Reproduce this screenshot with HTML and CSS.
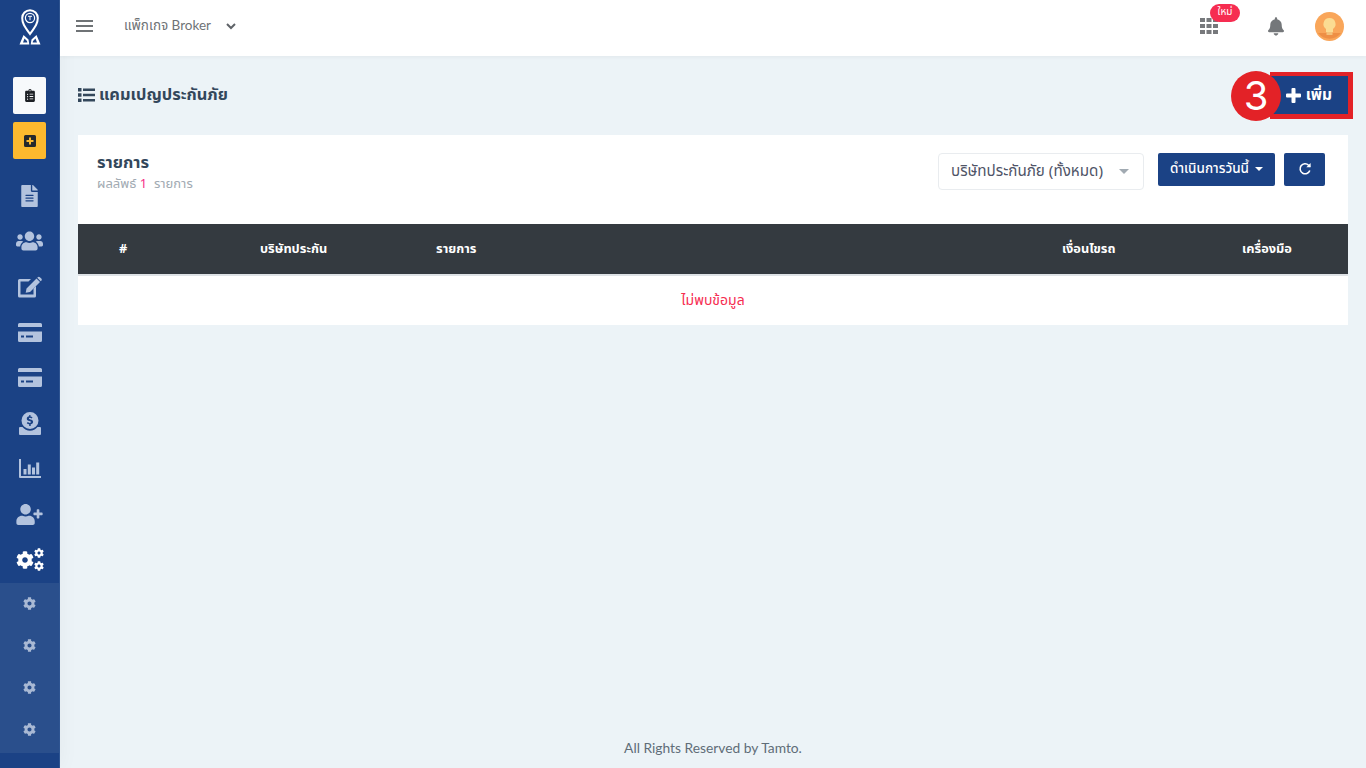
FILE: index.html

```html
<!DOCTYPE html>
<html>
<head>
  <title>แคมเปญประกันภัย</title>
  <link rel="stylesheet" href="styles.css">
</head>
<body>
<svg class="defs" width="0" height="0">
  <symbol id="i-cog" viewBox="0 0 512 512"><path d="M487.4 315.7l-42.6-24.6c4.3-23.2 4.3-47 0-70.2l42.6-24.6c4.9-2.8 7.1-8.6 5.5-14-11.1-35.6-30-67.8-54.7-94.6-3.800-4.100-10-5.100-14.800-2.300L380.800 110c-17.900-15.400-38.500-27.300-60.800-35.100V25.800c0-5.600-3.900-10.500-9.400-11.700-36.700-8.200-74.300-7.800-109.200 0-5.500 1.200-9.400 6.100-9.400 11.700V75c-22.200 7.900-42.800 19.800-60.800 35.100L88.700 85.500c-4.900-2.800-11-1.900-14.800 2.300-24.700 26.700-43.600 58.900-54.700 94.600-1.700 5.400.6 11.200 5.500 14L67.300 221c-4.300 23.200-4.300 47 0 70.200l-42.600 24.600c-4.900 2.800-7.100 8.600-5.500 14 11.100 35.600 30 67.800 54.700 94.600 3.800 4.100 10 5.100 14.800 2.300l42.600-24.600c17.900 15.400 38.500 27.300 60.800 35.100v49.200c0 5.600 3.900 10.500 9.400 11.700 36.700 8.200 74.300 7.800 109.200 0 5.500-1.200 9.400-6.100 9.400-11.700v-49.200c22.200-7.900 42.800-19.800 60.800-35.100l42.600 24.600c4.900 2.800 11 1.900 14.800-2.300 24.700-26.700 43.600-58.900 54.700-94.600 1.500-5.500-.7-11.300-5.600-14.100zM256 336c-44.100 0-80-35.900-80-80s35.900-80 80-80 80 35.900 80 80-35.900 80-80 80z"/></symbol>
  <symbol id="i-card" viewBox="0 0 24 19"><path fill-rule="evenodd" d="M1.500 0h21A1.500 1.500 0 0 1 24 1.500V4H0V1.500A1.500 1.500 0 0 1 1.500 0zM0 8.500h24v9a1.500 1.500 0 0 1-1.500 1.500h-21A1.500 1.500 0 0 1 0 17.500zm3 4v2h3v-2zm5 0v2h7v-2z"/></symbol>
</svg>

<div class="layout">
  <aside class="sidebar">
    <div class="logo">
      <svg width="24" height="36" viewBox="0 0 24 36" fill="none" stroke="#fff">
        <path d="M12 25C7 18 4.200 14.500 4.200 9a7.800 7.800 0 0 1 15.600 0c0 5.500-2.800 9-7.800 16z" stroke-width="2"/>
        <circle cx="12" cy="9" r="4.600" stroke-width="1.200"/>
        <path d="M10 7.300h4M12 7.300v3.900" stroke-width="1"/>
        <path d="M1.500 35.500L5.500 26l5 4.500.8 5zM22.500 35.500L18.500 26l-5 4.500-.8 5z" fill="#fff" stroke="none"/>
        <path d="M5 33.500l1.500-4 2.500 2.500.3 1.500zM19 33.500l-1.500-4-2.500 2.500-.3 1.500z" fill="#1b4285" stroke="none"/>
      </svg>
    </div>
    <div class="side-btn side-btn-white">
      <svg width="10" height="13" viewBox="0 0 384 512" fill="#1c1f24"><path d="M336 64h-80a64 64 0 0 0-128 0H48C21.500 64 0 85.500 0 112v352c0 26.500 21.500 48 48 48h288c26.500 0 48-21.500 48-48V112c0-26.500-21.500-48-48-48zM96 424a24 24 0 1 1 0-48 24 24 0 0 1 0 48zm0-96a24 24 0 1 1 0-48 24 24 0 0 1 0 48zm0-96a24 24 0 1 1 0-48 24 24 0 0 1 0 48zM192 40a24 24 0 1 1 0 48 24 24 0 0 1 0-48zm128 368H176v-32h144zm0-96H176v-32h144zm0-96H176v-32h144z"/></svg>
    </div>
    <div class="side-btn side-btn-yellow">
      <svg width="12" height="12" viewBox="0 0 12 12"><path fill="#26282c" fill-rule="evenodd" d="M1.500 0h9A1.500 1.500 0 0 1 12 1.500v9a1.500 1.500 0 0 1-1.500 1.500h-9A1.500 1.500 0 0 1 0 10.500v-9A1.500 1.500 0 0 1 1.500 0zM5 2.500v2.500H2.500v2H5v2.500h2V7h2.500V5H7V2.500z"/></svg>
    </div>

    <nav class="side-nav">
      <a class="side-item"><svg width="17" height="22" viewBox="0 0 384 512"><path d="M224 136V0H24C10.700 0 0 10.700 0 24v464c0 13.300 10.700 24 24 24h336c13.300 0 24-10.700 24-24V160H248c-13.200 0-24-10.800-24-24zm64 236c0 6.600-5.400 12-12 12H108c-6.600 0-12-5.400-12-12v-8c0-6.600 5.400-12 12-12h168c6.600 0 12 5.400 12 12v8zm0-64c0 6.600-5.400 12-12 12H108c-6.600 0-12-5.400-12-12v-8c0-6.600 5.400-12 12-12h168c6.600 0 12 5.400 12 12v8zm0-72v8c0 6.600-5.400 12-12 12H108c-6.600 0-12-5.400-12-12v-8c0-6.600 5.400-12 12-12h168c6.600 0 12 5.400 12 12zm96-114.100v6.100H256V0h6.100c6.400 0 12.500 2.500 17 7l97.900 98c4.500 4.500 7 10.600 7 16.900z"/></svg></a>
      <a class="side-item"><svg width="27" height="22" viewBox="0 0 640 512"><path d="M96 224c35.300 0 64-28.700 64-64s-28.700-64-64-64-64 28.700-64 64 28.700 64 64 64zm448 0c35.300 0 64-28.700 64-64s-28.700-64-64-64-64 28.700-64 64 28.700 64 64 64zm32 32h-64c-17.600 0-33.500 7.100-45.100 18.600 40.300 22.100 68.900 62 75.100 109.400h66c17.700 0 32-14.300 32-32v-32c0-35.300-28.700-64-64-64zm-256 0c61.900 0 112-50.100 112-112S381.900 32 320 32 208 82.100 208 144s50.100 112 112 112zm76.800 32h-8.300c-20.800 10-43.900 16-68.500 16s-47.600-6-68.500-16h-8.300C179.600 288 128 339.600 128 403.200V432c0 26.500 21.500 48 48 48h288c26.500 0 48-21.500 48-48v-28.800c0-63.600-51.600-115.200-115.200-115.200zm-223.700-13.400C161.500 263.100 145.600 256 128 256H64c-35.300 0-64 28.700-64 64v32c0 17.700 14.300 32 32 32h65.900c6.300-47.400 34.900-87.300 75.200-109.400z"/></svg></a>
      <a class="side-item"><svg width="25" height="22" viewBox="0 0 25 22"><path d="M2.500 3H14l-2.500 2.500H3.500v13h13v-6l2.500-2.500v10a1.500 1.500 0 0 1-1.500 1.500h-15A1.500 1.500 0 0 1 1 20v-15.500A1.500 1.500 0 0 1 2.500 3z"/><path d="M19.500 2.500l3.500 3.500-10 10-4.300.8.800-4.300zM20.800 1.200a1.500 1.500 0 0 1 2.100 0l1.400 1.400a1.500 1.500 0 0 1 0 2.100l-.6.600-3.500-3.500z"/></svg></a>
      <a class="side-item"><svg width="24" height="19"><use href="#i-card"/></svg></a>
      <a class="side-item"><svg width="24" height="19"><use href="#i-card"/></svg></a>
      <a class="side-item"><svg width="22" height="23" viewBox="0 0 22 23"><path fill-rule="evenodd" d="M11 0a8.500 8.500 0 1 1 0 17 8.500 8.500 0 0 1 0-17zm-.8 3v1.300C8.700 4.500 7.800 5.400 7.800 6.700c0 1.400 1 2 2.500 2.400 1.200.3 1.700.5 1.700 1 0 .5-.5.800-1.200.8-.8 0-1.500-.3-2.100-.8l-.9 1.200c.6.500 1.400.9 2.400 1V14h1.500v-1.700c1.500-.3 2.400-1.200 2.400-2.400 0-1.500-1-2.100-2.600-2.500-1.100-.3-1.600-.5-1.600-.9s.4-.7 1-.7c.6 0 1.200.2 1.800.6l.8-1.200c-.6-.4-1.300-.7-2-.8V3z"/><path d="M1 15h2.500a9.500 9.500 0 0 0 15 0H21a1 1 0 0 1 1 1v6a1 1 0 0 1-1 1H1a1 1 0 0 1-1-1v-6a1 1 0 0 1 1-1z"/></svg></a>
      <a class="side-item"><svg width="22" height="19" viewBox="0 0 22 19"><path d="M0 0h2v17h20v2H1a1 1 0 0 1-1-1zM4.500 10h3v5.500h-3zM8.800 5.500h3v10h-3zM13 8.500h3v7h-3zM17.200 3.500h3v12h-3z"/></svg></a>
      <a class="side-item"><svg width="27" height="21" viewBox="0 0 640 512"><path d="M624 208h-64v-64c0-8.800-7.200-16-16-16h-32c-8.800 0-16 7.200-16 16v64h-64c-8.800 0-16 7.200-16 16v32c0 8.800 7.200 16 16 16h64v64c0 8.800 7.200 16 16 16h32c8.800 0 16-7.200 16-16v-64h64c8.800 0 16-7.200 16-16v-32c0-8.800-7.200-16-16-16zm-400 48c70.700 0 128-57.300 128-128S294.700 0 224 0 96 57.300 96 128s57.300 128 128 128zm89.600 32h-16.700c-22.200 10.200-46.900 16-72.900 16s-50.600-5.800-72.900-16h-16.700C60.200 288 0 348.200 0 422.400V464c0 26.500 21.500 48 48 48h352c26.500 0 48-21.500 48-48v-41.600c0-74.200-60.200-134.400-134.400-134.400z"/></svg></a>
      <a class="side-item side-item-active">
        <svg class="cogs" width="28" height="24" viewBox="0 0 28 24">
          <use href="#i-cog" x="0" y="3" width="18" height="18"/>
          <use href="#i-cog" x="18" y="0" width="10" height="10"/>
          <use href="#i-cog" x="18" y="13" width="10" height="10"/>
        </svg>
      </a>
    </nav>

    <div class="side-sub">
      <a class="sub-item"><svg width="13" height="13"><use href="#i-cog"/></svg></a>
      <a class="sub-item"><svg width="13" height="13"><use href="#i-cog"/></svg></a>
      <a class="sub-item"><svg width="13" height="13"><use href="#i-cog"/></svg></a>
      <a class="sub-item"><svg width="13" height="13"><use href="#i-cog"/></svg></a>
    </div>
  </aside>

  <div class="main">
    <header class="topbar">
      <div class="burger"><span></span><span></span><span></span></div>
      <div class="package">แพ็กเกจ Broker</div>
      <svg class="chevron" width="10" height="7" viewBox="0 0 10 7" fill="none" stroke="#5f6368" stroke-width="2"><path d="M1 1l4 4 4-4"/></svg>
      <div class="top-right">
        <div class="apps">
          <svg width="18" height="16" viewBox="0 0 18 16" fill="#77797c"><path d="M0 0h5v4H0zM6.500 0h5v4h-5zM13 0h5v4h-5zM0 6h5v4H0zM6.500 6h5v4h-5zM13 6h5v4h-5zM0 12h5v4H0zM6.500 12h5v4h-5zM13 12h5v4h-5z"/></svg>
          <span class="badge-new">ใหม่</span>
        </div>
        <svg class="bell" width="16" height="19" viewBox="0 0 448 512" fill="#74777a"><path d="M224 512c35.320 0 63.970-28.650 63.970-64H160.030c0 35.350 28.650 64 63.970 64zm215.390-149.710c-19.320-20.760-55.470-51.990-55.470-154.290 0-77.700-54.480-139.900-127.940-155.160V32c0-17.670-14.320-32-31.980-32s-31.980 14.330-31.980 32v20.840C118.560 68.100 64.080 130.300 64.080 208c0 102.300-36.150 133.530-55.470 154.290-6 6.450-8.660 14.160-8.610 21.710.11 16.400 12.980 32 32.100 32h383.800c19.120 0 32-15.600 32.100-32 .05-7.550-2.610-15.270-8.610-21.710z"/></svg>
        <svg class="avatar" width="29" height="29" viewBox="0 0 29 29">
          <circle cx="14.500" cy="14.500" r="14.500" fill="#f9a65a"/>
          <path d="M3 21h23a14.500 14.500 0 0 1-23 0z" fill="#ee8f45"/>
          <path d="M14.500 6a6 6 0 0 1 3.500 10.900V20h-7v-3.100A6 6 0 0 1 14.500 6z" fill="#fbdc92"/>
          <rect x="11.500" y="20" width="6" height="3" fill="#f3c27a"/>
        </svg>
      </div>
    </header>

    <div class="content">
      <div class="page-head">
        <h1 class="page-title">
          <svg width="17" height="14" viewBox="0 0 17 14" fill="#33475b"><path d="M0 0h3.500v3.500H0zM0 5.200h3.500v3.500H0zM0 10.500h3.500V14H0zM5 .5h12v2.500H5zM5 5.700h12v2.500H5zM5 11h12v2.500H5z"/></svg>
          แคมเปญประกันภัย
        </h1>
        <div class="add-wrap">
          <button class="btn-add">
            <svg width="15" height="15" viewBox="0 0 15 15" fill="#fff"><path d="M5.500 1a1 1 0 0 1 1-1h2a1 1 0 0 1 1 1v4.500H14a1 1 0 0 1 1 1v2a1 1 0 0 1-1 1H9.500V14a1 1 0 0 1-1 1h-2a1 1 0 0 1-1-1V9.500H1a1 1 0 0 1-1-1v-2a1 1 0 0 1 1-1h4.500z"/></svg>
            เพิ่ม
          </button>
          <span class="step-frame"></span>
          <span class="step-num">3</span>
        </div>
      </div>

      <section class="card">
        <div class="card-head">
          <div>
            <h2 class="card-title">รายการ</h2>
            <div class="card-sub">ผลลัพธ์ <b>1</b> &nbsp;รายการ</div>
          </div>
          <div class="card-tools">
            <div class="select">
              <span>บริษัทประกันภัย (ทั้งหมด)</span>
              <i class="caret-gray"></i>
            </div>
            <button class="btn-blue btn-today">ดำเนินการวันนี้ <i class="caret-white"></i></button>
            <button class="btn-blue btn-icon">
              <svg width="14" height="14" viewBox="0 0 14 14" fill="none" stroke="#fff" stroke-width="1.600"><path d="M11.800 8.500A5 5 0 1 1 10.600 3.200L12 4.800"/><path d="M12.600 1v4.300H8.300z" fill="#fff" stroke="none"/></svg>
            </button>
          </div>
        </div>
        <table class="data-table">
          <thead>
            <tr>
              <th class="col-no">#</th>
              <th class="col-company">บริษัทประกัน</th>
              <th class="col-item">รายการ</th>
              <th class="col-cond">เงื่อนไขรถ</th>
              <th class="col-tool">เครื่องมือ</th>
            </tr>
          </thead>
          <tbody>
            <tr><td colspan="5" class="empty">ไม่พบข้อมูล</td></tr>
          </tbody>
        </table>
      </section>

      <footer class="footer">All Rights Reserved by Tamto.</footer>
    </div>
  </div>
</div>
</body>
</html>
```

FILE: styles.css

```css
* {
  box-sizing: border-box;
}
html, body {
  height: 100%;
}
body {
  margin: 0;
  background: #ecf3f7;
  color: #33475b;
  font-family: 'Noto Sans Thai', 'Noto Sans', 'Open Sans', sans-serif;
  font-size: 14px;
  overflow: hidden;
}
.defs {
  position: absolute;
}
.layout {
  display: flex;
  height: 768px;
}

/* sidebar */
.sidebar {
  width: 60px;
  flex: none;
  background: #1b4285;
  border-right: 1px solid #2f5592;
  box-shadow: 2px 0 18px rgba(0,0,0,0.04);
  display: flex;
  flex-direction: column;
  align-items: stretch;
}
.logo {
  height: 77px;
  padding-top: 9px;
  text-align: center;
}
.side-btn {
  width: 33px;
  height: 37px;
  margin: 0 0 8px 13px;
  border-radius: 2px;
  display: flex;
  align-items: center;
  justify-content: center;
}
.side-btn-white {
  background: #f7f9fb;
}
.side-btn-yellow {
  background: #fdb92e;
}
.side-nav {
  margin-top: 6px;
}
.side-item {
  height: 45.5px;
  display: flex;
  align-items: center;
  justify-content: center;
  fill: #b3c3de;
}
.side-item-active {
  fill: #fff;
}
.side-sub {
  height: 170px;
  background: #2a4f8c;
}
.sub-item {
  height: 42px;
  display: flex;
  align-items: center;
  justify-content: center;
  fill: #a9b9d4;
}

/* top bar */
.main {
  flex: 1;
  min-width: 0;
  display: flex;
  flex-direction: column;
}
.topbar {
  height: 56px;
  flex: none;
  background: #fff;
  box-shadow: 0 1px 4px rgba(0,0,0,0.05);
  display: flex;
  align-items: center;
  padding: 0 22px 4px 16px;
}
.burger {
  width: 17px;
  margin-right: 31px;
}
.burger span {
  display: block;
  height: 2px;
  background: #6f7376;
  margin: 3px 0;
}
.package {
  color: #6f7376;
  font-family: 'Lato', 'Noto Sans Thai', sans-serif;
  font-size: 13.500px;
}
.chevron {
  margin-left: 15px;
}
.top-right {
  margin-left: auto;
  display: flex;
  align-items: center;
}
.apps {
  position: relative;
  height: 16px;
  margin-right: 50px;
}
.badge-new {
  position: absolute;
  left: 10px;
  top: -14px;
  width: 30px;
  height: 18px;
  border-radius: 9px;
  background: #f62d51;
  color: #fff;
  font-size: 10px;
  line-height: 17px;
  text-align: center;
}
.bell {
  margin-right: 31px;
}

/* page */
.content {
  flex: 1;
  padding: 0 18px;
  display: flex;
  flex-direction: column;
}
.page-head {
  height: 78px;
  margin-bottom: 1px;
  display: flex;
  align-items: center;
  justify-content: space-between;
}
.page-title {
  margin: 0;
  font-size: 16.400px;
  font-weight: 700;
  color: #33475b;
  display: flex;
  align-items: center;
  gap: 4px;
}
.add-wrap {
  position: relative;
}
.btn-add {
  width: 78px;
  height: 38px;
  background: #1b4285;
  border: 0;
  color: #fff;
  font: 700 15.500px 'Noto Sans Thai', 'Noto Sans', sans-serif;
  display: flex;
  align-items: center;
  justify-content: flex-end;
  gap: 5px;
  padding: 0 16px 0 0;
}
.step-frame {
  position: absolute;
  left: 0;
  top: -4px;
  width: 83px;
  height: 47px;
  border: solid #e32227;
  border-width: 4px 5px 5px 0;
}
.step-num {
  position: absolute;
  left: -39px;
  top: -5px;
  width: 50px;
  height: 50px;
  border-radius: 50%;
  background: #e32227;
  color: #fff;
  font: 400 40px/50px 'Inter', sans-serif;
  text-align: center;
}

/* card */
.card {
  background: #fff;
  height: 190px;
}
.card-head {
  height: 89px;
  padding: 18px 23px 0 19px;
  display: flex;
  justify-content: space-between;
  align-items: flex-start;
}
.card-title {
  margin: 0;
  font-size: 16.500px;
  line-height: 20px;
  font-weight: 700;
  color: #33475b;
}
.card-sub {
  color: #a1aab2;
  font-size: 13px;
  line-height: 22px;
}
.card-sub b {
  color: #f62d87;
  font-weight: 400;
}
.card-tools {
  display: flex;
  align-items: flex-start;
}
.select {
  width: 206px;
  height: 37px;
  border: 1px solid #e9ecef;
  border-radius: 4px;
  display: flex;
  align-items: center;
  justify-content: space-between;
  padding: 0 14px 0 12px;
  font-size: 15.200px;
  color: #4f5467;
  margin-right: 14px;
}
.caret-gray {
  border: 5px solid transparent;
  border-top-color: #a1aab2;
  border-bottom-width: 0;
}
.btn-blue {
  height: 33px;
  background: #1b4285;
  border: 0;
  border-radius: 2px;
  color: #fff;
  font: 500 13.500px 'Noto Sans Thai', 'Noto Sans', sans-serif;
  padding: 0 12px 2px;
  display: flex;
  align-items: center;
  gap: 6px;
}
.btn-today {
  width: 117px;
}
.caret-white {
  border: 4px solid transparent;
  border-top-color: #fff;
  border-bottom-width: 0;
}
.btn-icon {
  width: 41px;
  margin-left: 9px;
  justify-content: center;
}

/* table */
.data-table {
  width: 100%;
  border-collapse: collapse;
  table-layout: fixed;
}
.data-table th {
  height: 51px;
  background: #343a40;
  border-bottom: 2px solid #dee2e6;
  color: #fff;
  font-size: 12.800px;
  font-weight: 700;
  text-align: left;
  padding: 0;
}
.data-table .col-no {
  width: 182px;
  padding-left: 41px;
}
.col-company {
  width: 176px;
}
.col-item {
  width: 626px;
}
.col-cond {
  width: 180px;
}
.empty {
  height: 50px;
  padding-bottom: 2px;
  text-align: center;
  color: #f62d51;
  font-size: 14px;
}

.footer {
  margin-top: auto;
  height: 41px;
  text-align: center;
  color: #5f6d78;
  font-family: 'Lato', 'Noto Sans', sans-serif;
  font-size: 13.800px;
  line-height: 42px;
}
```
